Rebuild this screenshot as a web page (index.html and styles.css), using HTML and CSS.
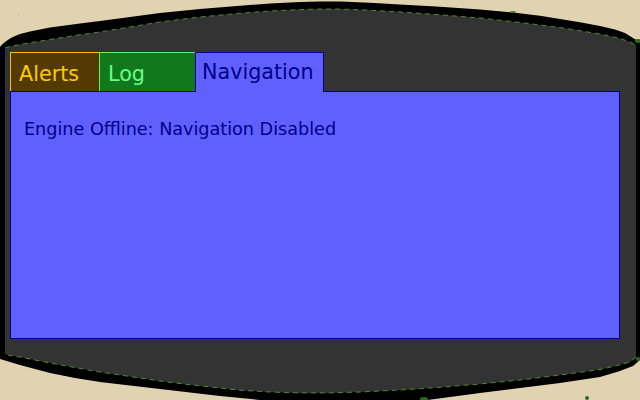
FILE: index.html
```html
<!DOCTYPE html>
<html lang="en">
<head>
  <meta charset="UTF-8">
  <title>Ship Console</title>
  <link rel="stylesheet" href="styles.css">
</head>
<body>
  <div class="screen">
    <!-- curved monitor housing -->
    <svg class="frame" width="640" height="400" viewBox="0 0 640 400">
      <polygon fill="#000" points="0,47 2,44.5 5,42 10,38.5 15,36 20,34 30,31.5 40,29.5 50,27.5 65,25.5 80,23.5 100,21 130,17 160,13 200,9 240,5.8 270,3.5 300,2 320,1.5 340,1.6 370,2.8 400,4.5 440,6.8 480,9.5 513,12.5 540,15.8 560,19 580,22.3 600,26 615,29.5 625,33 633,38 640,42 640,360 633,366 620,371 600,377 560,383 520,388 480,393 420,401 320,404 260,400 220,396 160,389 130,385.5 100,382 75,378 50,373 35,369 20,365 10,362 0,359"/>
      <polygon fill="#333" points="5,48 10,46.5 20,44.5 35,42 50,39.5 75,35.5 100,32 130,27 160,22 200,17 240,13.3 270,11 300,9.6 320,9 340,9.1 370,10.2 400,12 440,14.8 480,18 520,22.5 560,27.5 600,34 620,38.5 630,42 636,45 636,357 630,362 615,366 600,369.5 560,375 520,380 480,384 440,387.3 400,390 360,392 330,392.9 300,392.9 270,392 240,390.2 220,388 190,384.7 160,381 130,376.5 100,372 75,367.5 50,363 35,360 20,357 10,355.5 5,354"/>
      <polyline class="seam" points="5,48 10,46.5 20,44.5 35,42 50,39.5 75,35.5 100,32 130,27 160,22 200,17 240,13.3 270,11 300,9.6 320,9 340,9.1 370,10.2 400,12 440,14.8 480,18 520,22.5 560,27.5 600,34 620,38.5 630,42 636,45"/>
      <polyline class="seam" points="636,357 630,362 615,366 600,369.5 560,375 520,380 480,384 440,387.3 400,390 360,392 330,392.9 300,392.9 270,392 240,390.2 220,388 190,384.7 160,381 130,376.5 100,372 75,367.5 50,363 35,360 20,357 10,355.5 5,354"/>
      <ellipse cx="638" cy="41" rx="3" ry="2" fill="#2f6a1c"/>
      <ellipse cx="638" cy="359" rx="2" ry="2" fill="#2f6a1c"/>
      <ellipse cx="424" cy="399" rx="4" ry="2" fill="#2f6a1c"/>
      <ellipse cx="587" cy="398" rx="2" ry="2" fill="#2f6a1c"/>
      <ellipse cx="513" cy="12" rx="3" ry="1" fill="#3c7a24"/>
      <rect x="18" y="14" width="1" height="1" fill="#a89c84"/>
    </svg>

    <div class="content">
      <div class="tabs">
        <div class="tab tab-alerts">Alerts</div>
        <div class="tab tab-log">Log</div>
        <div class="tab tab-nav">Navigation</div>
      </div>
      <div class="panel">
        <p class="message">Engine Offline: Navigation Disabled</p>
      </div>
    </div>
  </div>
</body>
</html>
```

FILE: styles.css
```css
* {
  box-sizing: border-box;
}

body {
  margin: 0;
  background: #e0d3b1;
  font-family: "DejaVu Sans", sans-serif;
}

.screen {
  position: relative;
  width: 640px;
  height: 400px;
  overflow: hidden;
}

.frame {
  position: absolute;
  top: 0;
  left: 0;
}

.seam {
  fill: none;
  stroke: #4f8a2e;
  stroke-width: 1;
  stroke-dasharray: 5 4;
}

.content {
  position: relative;
  padding: 52px 0 0 10px;
}

.tabs {
  display: flex;
  align-items: flex-start;
}

.tab {
  height: 39px;
  padding: 9px 0 0 8px;
  font-size: 20.7px;
  line-height: 24px;
  border-top: 1px solid;
  border-left: 1px solid;
}

.tab-alerts {
  width: 89px;
  background: #553a00;
  color: #ffcc00;
  border-color: #ffc000;
}

.tab-log {
  width: 96px;
  padding-left: 8px;
  background: #12781c;
  color: #66ff88;
  border-color: #5ef070;
}

.tab-nav {
  position: relative;
  z-index: 1;
  width: 129px;
  height: 40px;
  margin-bottom: -1px;
  padding: 7px 0 0 6px;
  background: #6060ff;
  color: #000088;
  border-color: #000099;
  border-right: 1px solid #000099;
}

.panel {
  width: 610px;
  height: 248px;
  background: #6060ff;
  border: 1px solid #000099;
}

.message {
  margin: 0;
  padding: 27px 0 0 13px;
  font-size: 17.6px;
  color: #000088;
}
```
